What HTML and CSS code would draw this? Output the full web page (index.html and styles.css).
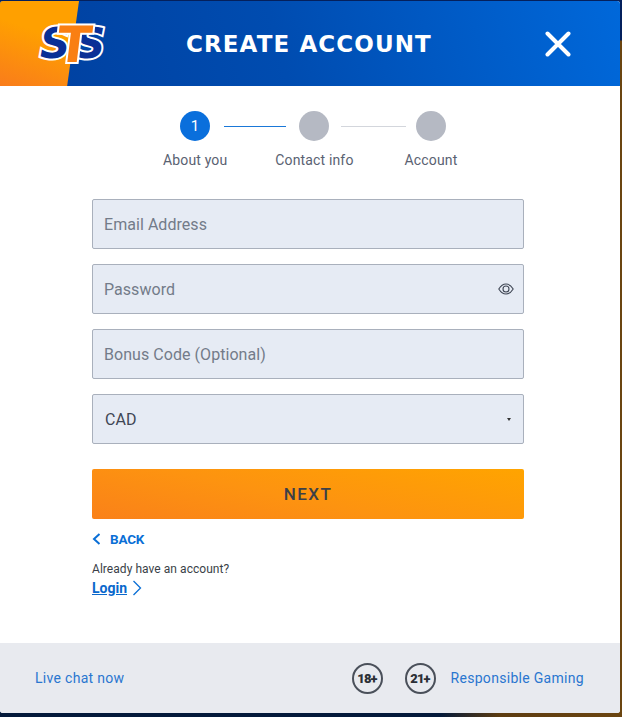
FILE: index.html
```html
<!DOCTYPE html>
<html lang="en">
<head>
    <meta charset="UTF-8">
    <meta name="viewport" content="width=device-width, initial-scale=1.0">
    <title>Create account</title>
    <link rel="stylesheet" href="styles.css">
</head>
<body>
    <div class="modal">
        <header class="head">
            <svg class="logo" width="76" height="50" viewBox="0 0 76 50">
                <text class="logo-s" x="3" y="39">S</text>
                <text class="logo-s" x="38" y="39">S</text>
                <text class="logo-t" x="18" y="43">T</text>
            </svg>
            <h1 class="title">CREATE ACCOUNT</h1>
            <svg class="close" width="26" height="26" viewBox="0 0 26 26">
                <path d="M2.5 2.5 L23.5 23.5 M23.5 2.5 L2.5 23.5"/>
            </svg>
        </header>

        <main class="body">
            <div class="track">
                <span class="dot active">1</span>
                <span class="line active"></span>
                <span class="dot"></span>
                <span class="line"></span>
                <span class="dot"></span>
            </div>
            <div class="labels">
                <span>About you</span>
                <span>Contact info</span>
                <span class="last">Account</span>
            </div>

            <form class="form">
                <input class="field" type="text" placeholder="Email Address">
                <div class="wrap">
                    <input class="field" type="password" placeholder="Password">
                    <svg class="eye" width="16" height="12" viewBox="0 0 16 12">
                        <path d="M.8 6 C3 2.4 5.4 1 8 1 S13 2.4 15.2 6 C13 9.6 10.6 11 8 11 S3 9.6 .8 6 Z"/>
                        <circle cx="8" cy="6" r="3"/>
                    </svg>
                </div>
                <input class="field" type="text" placeholder="Bonus Code (Optional)">
                <div class="wrap caret">
                    <select class="field pick">
                        <option>CAD</option>
                    </select>
                </div>
                <button class="next" type="button">NEXT</button>
            </form>

            <a class="back" href="#">
                <svg width="9" height="12" viewBox="0 0 9 12"><path d="M7.5 1 L2 6 L7.5 11"/></svg>
                BACK
            </a>
            <p class="have">Already have an account?</p>
            <div class="login-row">
                <a class="login" href="#">Login</a>
                <svg width="10" height="16" viewBox="0 0 10 16"><path d="M1.5 1 L8.5 8 L1.5 15"/></svg>
            </div>
        </main>

        <footer class="foot">
            <a class="foot-link" href="#">Live chat now</a>
            <div class="foot-right">
                <span class="age">18+</span>
                <span class="age">21+</span>
                <a class="foot-link" href="#">Responsible Gaming</a>
            </div>
        </footer>
    </div>
</body>
</html>
```

FILE: styles.css
```css
*{margin: 0px;padding: 0px;box-sizing: border-box;}
html,body{
    height: 100%;
}
body{
    padding: 1px 2px 4px 0px;
    overflow: hidden;
    font-family: Roboto, "Liberation Sans", sans-serif;
    background:
        linear-gradient(180deg, #04205c 0px, #04205c 40px, transparent 41px),
        linear-gradient(90deg, #03193a 0px, #03193a 440px, #5d3c10 500px, #6b4510 100%);
}
.modal{
    width: 620px;
    height: 712px;
    display: flex;
    flex-direction: column;
    background: #fff;
    border-radius: 3px;
    overflow: hidden;
}

/* header */
.head{
    position: relative;
    height: 85px;
    flex: none;
    display: flex;
    align-items: center;
    background: linear-gradient(75deg, #003f9e 0%, #004cb0 45%, #0068da 100%);
}
.head::before{
    content: "";
    position: absolute;
    left: 0px;
    top: 0px;
    width: 79px;
    height: 85px;
    background: linear-gradient(20deg, #f97c1b 0%, #ffa000 60%);
    clip-path: polygon(0 0, 100% 0, 85% 100%, 0 100%);
}
.logo{
    position: relative;
    margin-left: 37px;
    overflow: visible;
}
.logo text{
    font-family: "DejaVu Sans", sans-serif;
    font-weight: 700;
    paint-order: stroke;
    stroke: #fff;
    stroke-width: 4px;
    stroke-linejoin: miter;
}
.logo-s{
    font-size: 42px;
    font-style: italic;
    fill: #0a2f96;
}
.logo-t{
    font-size: 50px;
    font-style: normal;
    fill: #f97f12;
    transform: skewX(-7deg);
    transform-origin: 36px 43px;
}
.title{
    margin-left: 73px;
    width: 246px;
    color: #fff;
    font-family: "DejaVu Sans", sans-serif;
    font-size: 23px;
    font-weight: 700;
    white-space: nowrap;
    letter-spacing: 1.1px;
}
.close{
    margin-left: 113px;
    fill: none;
    stroke: #fff;
    stroke-width: 4px;
    stroke-linecap: round;
}

/* steps */
.body{
    flex: 1;
    padding-top: 25px;
}
.track{
    display: flex;
    align-items: center;
    height: 30px;
    padding-left: 180px;
}
.dot{
    width: 30px;
    height: 30px;
    flex: none;
    border-radius: 50%;
    background: #b5b9c3;
    color: #fff;
    font-size: 15px;
    line-height: 30px;
    text-align: center;
}
.dot.active{
    background: #0a6fdc;
}
.line{
    height: 1px;
    width: 65px;
    margin: 0px 10px 0px 12px;
    background: #d3d6dc;
}
.line.active{
    margin: 0px 13px 0px 14px;
    width: 62px;
    background: #1a78d8;
}
.labels{
    display: flex;
    gap: 48px;
    margin-top: 11px;
    padding-left: 163px;
    font-size: 14px;
    line-height: 16px;
    letter-spacing: 0.15px;
    color: #5a6272;
}
.labels .last{
    margin-left: 3px;
}

/* form */
.form{
    width: 432px;
    margin: 31px 0px 0px 92px;
    display: flex;
    flex-direction: column;
    gap: 15px;
}
.field{
    display: block;
    width: 100%;
    height: 50px;
    padding: 0px 11px;
    background: #e6ebf4;
    border: 1px solid #a9b0bc;
    border-radius: 2px;
    font-family: Roboto, "Liberation Sans", sans-serif;
    font-size: 16px;
    letter-spacing: 0.05px;
    color: #3f4654;
    outline: none;
}
.field::placeholder{
    color: #737b89;
    opacity: 1;
}
.pick{
    appearance: none;
    -webkit-appearance: none;
    padding-left: 12px;
}
.wrap{
    position: relative;
}
.eye{
    position: absolute;
    right: 10px;
    top: 19px;
    fill: none;
    stroke: #3f4654;
    stroke-width: 1.1px;
}
.caret::after{
    content: "";
    position: absolute;
    right: 13px;
    top: 24px;
    border-left: 2.5px solid transparent;
    border-right: 2.5px solid transparent;
    border-top: 3px solid #333;
}
.next{
    height: 50px;
    margin-top: 10px;
    border: none;
    border-radius: 2px;
    background: linear-gradient(12deg, #fa8119 0%, #fd9310 45%, #ffa400 100%);
    color: #3b4048;
    font-family: Roboto, "Liberation Sans", sans-serif;
    font-size: 17px;
    font-weight: 500;
    letter-spacing: 1.4px;
}

/* links under the form */
.back{
    display: flex;
    align-items: center;
    gap: 9px;
    margin: 12px 0px 0px 92px;
    height: 16px;
    color: #0a6fd6;
    font-size: 13.5px;
    font-weight: 700;
    letter-spacing: -0.2px;
    text-decoration: none;
}
.back svg,.login-row svg{
    fill: none;
    stroke: #0a6fd6;
    stroke-width: 2px;
}
.have{
    margin: 15px 0px 0px 92px;
    font-size: 12px;
    line-height: 15px;
    letter-spacing: 0.05px;
    color: #3a3f48;
}
.login-row{
    display: flex;
    align-items: center;
    gap: 5px;
    margin: 2px 0px 0px 92px;
}
.login-row svg{
    stroke-width: 1.3px;
}
.login{
    color: #0a68cc;
    font-size: 14px;
    font-weight: 700;
    line-height: 18px;
}

/* footer */
.foot{
    height: 70px;
    flex: none;
    display: flex;
    justify-content: space-between;
    align-items: center;
    padding: 0px 36px 0px 35px;
    background: #e8eaef;
}
.foot-right{
    display: flex;
    align-items: center;
    gap: 22px;
}
.foot-link{
    color: #2a76cf;
    font-size: 14px;
    letter-spacing: 0.3px;
    text-decoration: none;
}
.age{
    width: 31px;
    height: 31px;
    border: 2px solid #4a505a;
    border-radius: 50%;
    color: #2b2f36;
    font-size: 13px;
    font-weight: 900;
    letter-spacing: -0.9px;
    line-height: 27px;
    text-align: center;
}
.age + .foot-link{
    margin-left: -7px;
}
```
